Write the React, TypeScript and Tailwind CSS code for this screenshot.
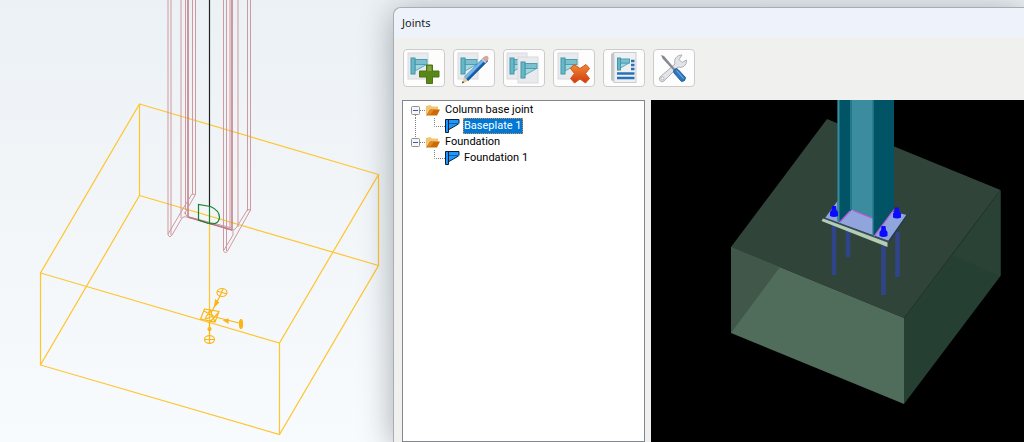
import { useState } from 'react';
import type { ReactNode } from 'react';

// grey sheet with the teal bracket, shared by most of the toolbar icons
function JointSheet({ x = 0, y = 0 }: { x?: number; y?: number }) {
  return (
    <g transform={`translate(${x} ${y})`}>
      <rect x="5" y="4" width="20" height="26" fill="#e9eaed" stroke="#d9dadd" />
      <path d="M12 15.500h11.500L12 22z" fill="#a5d5de" stroke="#5eaabb" />
      <rect x="12" y="10.500" width="12" height="5" fill="#7cc0ce" stroke="#4c9fb2" />
      <rect x="8" y="9" width="4" height="16" fill="#69b6c7" stroke="#4196aa" />
    </g>
  );
}

const tools: { label: string; icon: ReactNode }[] = [
  {
    label: 'New joint',
    icon: (
      <>
        <JointSheet />
        <path d="M23.500 16h6v6h6.500v6h-6.500v6.500h-6v-6.500h-7v-6h7z" fill="#588617" stroke="#4a7512" />
        <path d="M24.500 17h4v5h-4z" fill="#86a23e" />
      </>
    ),
  },
  {
    label: 'Edit joint',
    icon: (
      <>
        <JointSheet />
        <path d="M31 8l4 4-20 20-4-4z" fill="#2f7fcb" />
        <path d="M31.500 8.500l1.500 1.500-20 20-2-2z" fill="#7bb6e6" />
        <path d="M33.500 10.500l1.500 1.500-20 20-1.500-1.500z" fill="#165a9f" />
        <path d="M11 28l4 4-6 2.500z" fill="#eccb8f" />
        <path d="M9.700 32l1.600 1.600-2.500 1z" fill="#444" />
        <path d="M29.500 9.500l2-2q2-1.500 3.500 0t0 3.500l-2 2z" fill="#dca597" />
        <path d="M28.500 10.500l1.200-1.200 3.700 3.700-1.200 1.200z" fill="#c5ccd3" />
      </>
    ),
  },
  {
    label: 'Copy joint',
    icon: (
      <>
        <JointSheet x={-1} />
        <JointSheet x={10} y={4} />
      </>
    ),
  },
  {
    label: 'Delete joint',
    icon: (
      <>
        <JointSheet />
        <path
          d="M21 15.500l6 4 6-4 3.500 4-4 5 4 5-4 4.500-5.500-4-5.500 4-4-4.500 4-5-4-5z"
          fill="url(#deleteCross)"
          stroke="#d4521c"
        />
      </>
    ),
  },
  {
    label: 'Report',
    icon: (
      <>
        <path d="M8 5l3-2v30l-3-2z" fill="#c3c5c9" />
        <rect x="11" y="3.500" width="22" height="30" fill="#eff0f2" stroke="#cccdd1" />
        <path d="M17.500 14h8.500l-8.500 5z" fill="#a5d5de" stroke="#5eaabb" />
        <rect x="17.500" y="10" width="9" height="4" fill="#7cc0ce" stroke="#4c9fb2" />
        <rect x="14.500" y="9" width="3" height="12" fill="#69b6c7" stroke="#4196aa" />
        <path d="M28 12h3.500M28 16h3.500M28 20h3.500M14 24.500h17.500M14 29h17.500" stroke="#2a72b8" strokeWidth="2.500" />
      </>
    ),
  },
  {
    label: 'Settings',
    icon: (
      <>
        <path
          d="M7 28l15-13c-1.500-4.500 1.500-9 7-9l-3 4.500 3 3 4.500-2.500c.5 5.500-4 8.500-8.500 7l-14 14c-3 2-6-1-4-4z"
          fill="#e3e4e7"
          stroke="#aeb0b6"
        />
        <circle cx="9.500" cy="29.500" r="1.500" fill="#fff" stroke="#aeb0b6" />
        <path d="M8 6l3 1 12 14-1.500 1.500-12-13z" fill="#85898f" />
        <path d="M21.500 20.500q2-2 3.500 0l7.500 8q0 4-4 4l-7.500-8.500q-1-2 .5-3.500z" fill="#2d79bf" stroke="#1d5d9d" />
        <path d="M23.500 21.500l7 8" stroke="#82b7e4" />
      </>
    ),
  },
];

const groups = [
  { name: 'Column base joint', items: ['Baseplate 1'] },
  { name: 'Foundation', items: ['Foundation 1'] },
];

function FolderIcon() {
  return (
    <svg width="16" height="16" viewBox="0 0 16 16" className="shrink-0">
      <path d="M1 4l4-1 2 1.500h6V8H5l-4 5z" fill="#f3c572" />
      <path d="M1 13.500l4-6h10l-3 6z" fill="#cc6a05" />
      <path d="M2 12.500l3.500-5H9l-3.500 5z" fill="#dd8a26" />
    </svg>
  );
}

function BracketIcon() {
  return (
    <svg width="16" height="16" viewBox="0 0 16 16" className="shrink-0">
      <path d="M3 5h10.500v1L4 11.500H3z" fill="#1e96ff" />
      <path d="M3 2h11v3H3z" fill="#1e96ff" />
      <path d="M3 1.500h11v4M13.500 6L4 11.500" fill="none" stroke="#12202e" />
      <path d="M4 5.500h9.500" stroke="#0c5fae" />
      <path d="M.5 1.500h3v13h-3z" fill="#1e96ff" stroke="#12202e" />
    </svg>
  );
}

function JointTree() {
  const [closed, setClosed] = useState<string[]>([]);
  const [selected, setSelected] = useState('Baseplate 1');

  const toggle = (name: string) =>
    setClosed(closed.includes(name) ? closed.filter((n) => n !== name) : [...closed, name]);

  return (
    <ul className="w-[243px] shrink-0 border border-[#82878f] bg-white py-px pl-[5px] font-['Roboto',sans-serif] text-[11px] leading-4 text-black">
      {groups.map((group, index) => {
        const last = index === groups.length - 1;
        const open = !closed.includes(group.name);
        return (
          <li key={group.name}>
            <div className="flex h-4 items-center">
              <button type="button" aria-label={`Toggle ${group.name}`} onClick={() => toggle(group.name)}>
                <svg width="17" height="16" viewBox="0 0 17 16" className="block">
                  <path d={last ? 'M7.500 0v4M12 8.500h5' : 'M7.500 13v3M12 8.500h5'} stroke="#808080" strokeDasharray="1 1" />
                  <rect x="3.500" y="4.500" width="8" height="8" rx="1" fill="#f6f6f6" stroke="#919191" />
                  <path d={open ? 'M5 8.500h5' : 'M5 8.500h5M7.500 6v5'} stroke="#3b5ca8" />
                </svg>
              </button>
              <FolderIcon />
              <span className="pl-1">{group.name}</span>
            </div>
            {open &&
              group.items.map((item) => (
                <div key={item} className="flex h-4 items-center">
                  <svg width="37" height="16" viewBox="0 0 37 16" className="shrink-0">
                    {!last && <path d="M7.500 0v16" stroke="#808080" strokeDasharray="1 1" />}
                    <path d="M26.500 0v8.500H37" fill="none" stroke="#808080" strokeDasharray="1 1" />
                  </svg>
                  <BracketIcon />
                  <button
                    type="button"
                    onClick={() => setSelected(item)}
                    className={
                      item === selected
                        ? 'ml-0.5 h-4 border border-dotted border-[#e08a3c] bg-[#0078d7] leading-[14px] text-white'
                        : 'ml-0.5 h-4 border border-transparent leading-[14px]'
                    }
                  >
                    {item}
                  </button>
                </div>
              ))}
          </li>
        );
      })}
    </ul>
  );
}

function WireModel() {
  return (
    <svg viewBox="0 0 393 442" preserveAspectRatio="xMinYMin meet" className="block w-full" fill="none">
      {/* foundation block */}
      <g stroke="#ffc52e" strokeWidth="1.200">
        <path d="M139.500 104L378.500 174.500 279.500 343 40.500 273z" />
        <path d="M139.500 195.500L378.500 265.500 279.500 434.500 40.500 365z" />
        <path d="M139.500 104v91.500M378.500 174.500v91M279.500 343v91.500M40.500 273v92M209.500 224v112" />
      </g>

      {/* steel column */}
      <g stroke="#cf999e">
        <path d="M168 0v235M171 0v235M181 0v218M185.500 0v210M192.500 0v194M195.500 0v194" />
        <path d="M223.500 0v251M226.500 0v251M230 0v228M238 0v227M247.500 0v211M250.500 0v211" />
        <path d="M188 0v217M232 0v230" stroke="#c17a80" strokeWidth="1.500" />
        <path d="M168 235l2 2 2-2 10-17M168 234l16-27 8-13 3.500.5-11 19" />
        <path d="M223.500 251l2 2 2-2 23-41-3-.5-11 18q-2 3-5 2.500M224 250l9-15v-5" />
        <path d="M182 218q2-2 5-1l45 13M185 212q0 4 4 5l43 11" />
        <path d="M188 217l44 13" stroke="#b87d86" strokeWidth="1.500" />
      </g>
      <path d="M209.500 0v207" stroke="#222" strokeWidth="1.200" />
      <path
        d="M198.500 204.500v15.500l10 3.500q10 2 11-6 0-7-9-11zM209.500 207v17"
        stroke="#17812c"
        strokeWidth="1.200"
      />

      {/* support */}
      <g stroke="#fbb616" strokeWidth="1.200">
        <path d="M204.500 309l14.500 2.500-4 10.500-14.500-3zM205 319l5-9 5 12M204 311l9 5-7 3M209 323l10-11" />
        <path d="M211 313l9-17M215 317l24 6M209.500 322v14" />
        <path d="M215.500 300l3 2.500-4 4zM224 320.500l4-1.500v4z" fill="#fbb616" />
        <circle cx="209.500" cy="329" r="1.500" fill="#fbb616" />
        <ellipse cx="222" cy="292.500" rx="5" ry="4" />
        <path d="M217 291l10 3M223 289l-3 7" />
        <ellipse cx="241" cy="324" rx="1.500" ry="4.500" fill="#fbb616" />
        <ellipse cx="209.500" cy="339.500" rx="5" ry="3.800" />
        <path d="M204 339.500h11M209.500 336v7" />
      </g>
    </svg>
  );
}

function SolidModel() {
  return (
    <svg viewBox="651 100 373 342" preserveAspectRatio="xMinYMin meet" className="block w-full">
      {/* concrete block */}
      <path d="M827 119L1000.500 190 904 318 731 247z" fill="#30443a" />
      <path d="M731 247L904 318v86L731 333z" fill="#4f6d5a" />
      <path d="M731 247l49 20-49 66z" fill="#40574a" />
      <path d="M1000.500 190v86L904 404v-86z" fill="#254033" />
      <path d="M1000.500 190v86L953 256z" fill="#2a4236" />

      {/* anchors */}
      <path d="M834 224v51M848 230v27M883.500 245v50M897.500 232v45" stroke="#304589" strokeWidth="4.500" />

      {/* base plate */}
      <path d="M839 199l68 16-18.500 26L825 218z" fill="#8fa5dc" />
      <path d="M907 214l.5 1.500-18.500 27-.5-2z" fill="#243a4a" />
      <path d="M825 217.500l64 23.500-1 2-64-23z" fill="#3a4c59" />
      <path d="M823 218.500l64.500 24v4.500l-66-26z" fill="#b4ceb4" />

      {/* column */}
      <path d="M837.500 100h14v110l-12 12-2-1z" fill="#005465" />
      <path d="M837.500 100h2v122l-2-1z" fill="#3b8c9e" />
      <path d="M851 100h22v118.500L853 210h-2z" fill="#3b8c9e" />
      <path d="M850 100h2v110h-2z" fill="#23788a" />
      <path d="M873 100h21v109l-21 28z" fill="#005465" />
      <path d="M872.500 100h1.500v136h-1.500z" fill="#1b7384" />
      <path d="M840 222l10-11M853 210.500l19 7.500M874 236.500l20-27" stroke="#c34fd8" strokeWidth="1.200" fill="none" />

      {/* nuts */}
      <g fill="#0b0bff">
        <path d="M832 206h4l.5 4 1.500 2v4q-4 2-8 0v-4l1.500-2z" />
        <path d="M881.500 226h4l.5 4 1.500 2v4q-4 2-8 0v-4l1.500-2z" />
        <path d="M895 207.500h4l.5 4 1.500 2v4q-4 2-8 0v-4l1.500-2z" />
      </g>
    </svg>
  );
}

export default function App() {
  return (
    <main className="grid h-screen grid-cols-[393fr_631fr] overflow-hidden bg-linear-to-b from-[#ecf1f5] to-[#f8fbfd] font-['Noto_Sans',sans-serif]">
      <div className="min-w-0">
        <WireModel />
      </div>

      <section className="mt-[7px] flex min-w-0 flex-col rounded-tl-lg border-t border-l border-[#a9adb1] bg-[#f0f0ef] shadow-[0_4px_32px_rgba(40,50,60,0.4)]">
        <header className="flex h-[29px] shrink-0 items-center rounded-tl-lg bg-[#eef3fb] px-2">
          <h1 className="text-[11px] leading-4 text-[#1b1b1b]">Joints</h1>
        </header>

        <div className="flex shrink-0 gap-2 px-[9px] pt-3 pb-[13px]">
          <svg width="0" height="0" className="absolute">
            <linearGradient id="deleteCross" x1="0" y1="0" x2="0" y2="1">
              <stop offset="0" stopColor="#f28a33" />
              <stop offset="1" stopColor="#cf3b10" />
            </linearGradient>
          </svg>
          {tools.map((tool) => (
            <button
              key={tool.label}
              type="button"
              aria-label={tool.label}
              className="h-[38px] w-[42px] rounded border border-[#cfcbcd] bg-[#fdfdfd]"
            >
              <svg viewBox="1 1 40 36" className="block h-full w-full" fill="none">
                {tool.icon}
              </svg>
            </button>
          ))}
        </div>

        <div className="flex min-h-0 grow gap-1.5 pl-2">
          <JointTree />
          <div className="min-w-0 grow overflow-hidden bg-black">
            <SolidModel />
          </div>
        </div>
      </section>
    </main>
  );
}
